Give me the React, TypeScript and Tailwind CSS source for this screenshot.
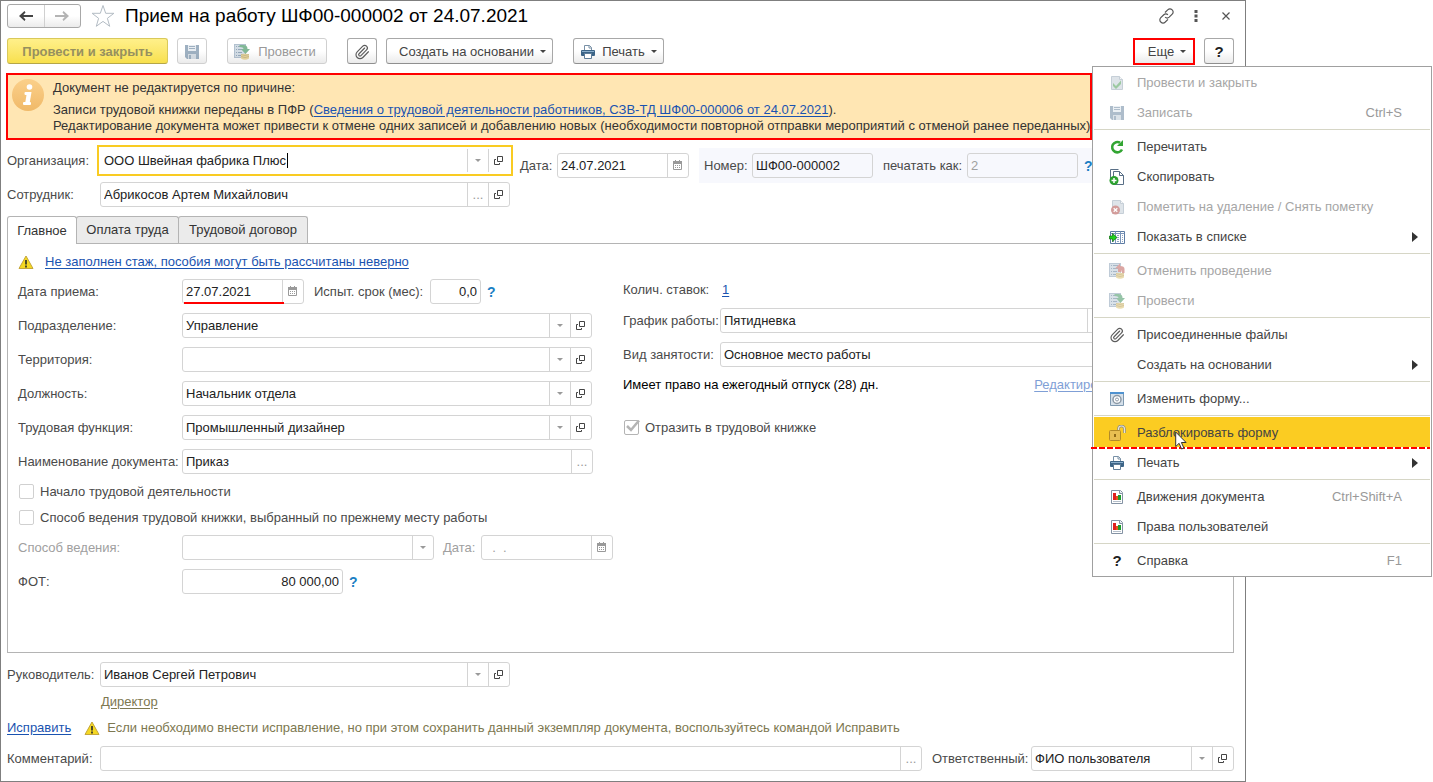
import type { ReactNode } from "react";
import clsx from "clsx";
import { Paperclip } from "lucide-react";

const CELL =
  "flex w-[21px] shrink-0 items-center justify-center border-l border-[#d4d4d4] leading-none";

/* ---------- icons ---------- */

function FloppyIcon() {
  return (
    <svg width="16" height="16" viewBox="0 0 16 16" aria-hidden="true">
      <path d="M1 1h14v14H3l-2-2z" fill="#5f7d99" />
      <path d="M4 1h8v6H4z" fill="#d9e2ea" />
      <path d="M5 2.500h6M5 4.500h6" stroke="#5f7d99" />
      <path d="M4 10h8v5H4z" fill="#b9c6d2" />
      <path d="M5 11h2v4H5z" fill="#5f7d99" />
    </svg>
  );
}

function PostIcon({ undo = false }: { undo?: boolean }) {
  return (
    <svg width="16" height="16" viewBox="0 0 16 16" aria-hidden="true">
      <path d="M0 0h12v14H0z" fill="#8098b0" />
      <path d="M1 1h10v12H1z" fill="#b5c5d3" />
      <path d="M2 2.500h1M4 2.500h5M2 5.500h1M4 5.500h5M2 8.500h1M4 8.500h4M2 11.500h1M4 11.500h3" stroke="#4f6f8f" />
      {undo ? (
        <path d="M11 0.500L6 5.500h3V9h3.500V7.500H13V10h2.500V6Q15.500 3 11 3z" fill="#b8504a" />
      ) : (
        <path d="M5.500 1H9.500q4 0 4 4h2.500l-4.500 5L7 5h2.500Q9.500 3 5.500 3z" fill="#2f8a52" />
      )}
      <path d="M7 10.500q4-1.500 8 0v4q-4 2.500-8 0z" fill="#d8bb62" />
      <path d="M7 12.500q4 2 8 0M7 10.500q4 2 8 0" fill="none" stroke="#9d8233" strokeWidth=".8" />
    </svg>
  );
}

function ClipIcon() {
  return <Paperclip size={16} strokeWidth={1.75} className="text-[#5c5c5c]" aria-hidden="true" />;
}

function PrinterIcon() {
  return (
    <svg width="16" height="16" viewBox="0 0 16 16" aria-hidden="true">
      <path d="M4.500 6V1.500h5l2 2V6" fill="#fff" stroke="#7890a6" />
      <path d="M9 1.500V4h2.500" fill="none" stroke="#7890a6" />
      <rect x="1" y="6" width="14" height="6" rx="1" fill="#3c6487" />
      <path d="M2 7.500h12" stroke="#8db0cd" />
      <path d="M4.500 9.500h7v5h-7z" fill="#fff" stroke="#5f7d99" />
    </svg>
  );
}

function DocCheckIcon() {
  return (
    <svg width="16" height="16" viewBox="0 0 16 16" aria-hidden="true">
      <path d="M2.500 1.500h8l3 3v10h-11z" fill="#bfcad5" stroke="#8fa0b0" />
      <path d="M10.500 1.500v3h3" fill="#eef2f5" stroke="#8fa0b0" />
      <path d="M4 8l3 3 5-5.500V9L7 14l-3-3z" fill="#3c9445" />
    </svg>
  );
}

function RefreshIcon() {
  return (
    <svg width="16" height="16" viewBox="0 0 16 16" aria-hidden="true">
      <path d="M13 10.500A5.200 5.200 0 1 1 11 3.700" fill="none" stroke="#32a532" strokeWidth="2.600" />
      <path d="M8 7h6V1z" fill="#32a532" />
    </svg>
  );
}

function CopyDocIcon() {
  return (
    <svg width="16" height="18" viewBox="0 0 16 18" aria-hidden="true">
      <path d="M1.500 13V1.500h8" fill="none" stroke="#596f86" />
      <path d="M4.500 3.500h6l4 4v9h-10z" fill="#fff" stroke="#596f86" />
      <path d="M10.500 3.500v4h4" fill="none" stroke="#596f86" />
      <circle cx="5" cy="12.500" r="4.500" fill="#2ba02f" />
      <path d="M5 10v5M2.500 12.500h5" stroke="#fff" strokeWidth="1.500" />
    </svg>
  );
}

function DocDeleteIcon() {
  return (
    <svg width="16" height="16" viewBox="0 0 16 16" aria-hidden="true">
      <path d="M3.500 1.500h8l3 3v10h-11z" fill="#bfcad5" stroke="#8fa0b0" />
      <path d="M11.500 1.500v3h3" fill="#eef2f5" stroke="#8fa0b0" />
      <circle cx="6.500" cy="11" r="4.500" fill="#a83c38" />
      <path d="M4.700 9.200l3.600 3.600M8.300 9.200l-3.600 3.600" stroke="#fff" strokeWidth="1.300" />
    </svg>
  );
}

function ListIcon() {
  return (
    <svg width="16" height="16" viewBox="0 0 16 16" aria-hidden="true">
      <path d="M1.500 2.500h14v12h-14z" fill="#fff" stroke="#5c7ba3" />
      <path d="M1.500 4.500h14M6.500 2.500v12M11.500 2.500v12" stroke="#7b96ba" />
      <path d="M8 6.500h2M8 8.500h2M8 10.500h2M8 12.500h2M13 6.500h1M13 8.500h1M13 10.500h1M13 12.500h1M3 12.500h2" stroke="#8ba3c1" />
      <path d="M0.500 7h3V4.500L8 8.500 3.500 12.500V10h-3z" fill="#1fd11f" stroke="#0b6c0b" strokeWidth=".7" />
    </svg>
  );
}

function FormIcon() {
  return (
    <svg width="16" height="16" viewBox="0 0 16 16" aria-hidden="true">
      <path d="M1.500 1.500h13v13h-13z" fill="#d5e0ea" stroke="#7f99b0" />
      <path d="M1 1h14v2H1z" fill="#4f92d0" />
      <circle cx="8" cy="8.500" r="4" fill="#fff" stroke="#8b98a5" strokeWidth="1.500" />
      <circle cx="8" cy="8.500" r="1.500" fill="none" stroke="#8b98a5" />
    </svg>
  );
}

function UnlockIcon() {
  return (
    <svg width="17" height="16" viewBox="0 0 17 16" aria-hidden="true">
      <path d="M9.500 7V4q0-3 3-3t3 3v4" fill="none" stroke="#8b8b80" strokeWidth="2.600" />
      <path d="M9.500 7V4q0-3 3-3t3 3v4" fill="none" stroke="#e8e4d6" strokeWidth="1.200" />
      <rect x="0.500" y="5.500" width="11" height="10" rx="1" fill="#e8bf52" stroke="#b28a28" />
      <path d="M6 9v3" stroke="#7a560a" strokeWidth="1.600" />
    </svg>
  );
}

function ReportIcon() {
  return (
    <svg width="16" height="16" viewBox="0 0 16 16" aria-hidden="true">
      <path d="M2.500 1.500h9l2 2v11h-11z" fill="#fff" stroke="#8493a4" />
      <path d="M10.500 1.500v3h3" fill="#e3e9ef" stroke="#8493a4" />
      <path d="M4 4h3v7H4z" fill="#de2020" />
      <path d="M7 7h2v4H7z" fill="#e25a1c" />
      <path d="M9 6h3v5H9z" fill="#1c9c2b" />
      <path d="M4 12.500h8" stroke="#b5bfca" />
    </svg>
  );
}

function CalendarIcon() {
  return (
    <svg width="10" height="11" viewBox="0 0 10 11" aria-hidden="true">
      <path d="M.5 2.500h8v7h-8z" fill="#fff" stroke="#9a9a9a" />
      <path d="M0 1h9v3H0zM2 0h1v1H2zM6 0h1v1H6z" fill="#9a9a9a" />
      <path d="M2 5.500h5M2 7.500h5" stroke="#9a9a9a" strokeDasharray="1 1" />
    </svg>
  );
}

function OpenIcon() {
  return (
    <svg width="10" height="9" viewBox="0 0 10 9" fill="none" stroke="#444" aria-hidden="true">
      <path d="M3.500 .5h5v5h-5z" />
      <path d="M2 3.500H.5v5h5V7" />
    </svg>
  );
}

function Caret({ className }: { className?: string }) {
  return (
    <svg width="6" height="3" viewBox="0 0 6 3" className={clsx("shrink-0", className)} aria-hidden="true">
      <path d="M0 0h6L3 3z" fill="currentColor" />
    </svg>
  );
}

function WarningIcon() {
  return (
    <svg width="16" height="15" viewBox="0 0 16 15" aria-hidden="true">
      <path d="M8 1l7 12.500H1z" fill="#f5d822" stroke="#c4a63a" strokeLinejoin="round" />
      <path d="M8 5v4.500M8 10.500v2" stroke="#3d3b28" strokeWidth="1.800" />
    </svg>
  );
}

function ArrowIcon({ forward = false }: { forward?: boolean }) {
  return (
    <svg width="14" height="10" viewBox="0 0 14 10" className={forward ? "rotate-180 text-[#b4b4b4]" : "text-[#444]"} aria-hidden="true">
      <path d="M5.500 0L0 5l5.500 5 1-1.500L4.300 6H14V4H4.300l2.200-2.500z" fill="currentColor" />
    </svg>
  );
}

/* ---------- form controls ---------- */

type Cell = "drop" | "open" | "more" | "date";

const CELL_TITLES: Record<Cell, string> = {
  drop: "Выбрать",
  open: "Открыть",
  more: "Показать все",
  date: "Календарь",
};

interface FieldProps {
  id: string;
  value?: string;
  cells?: Cell[];
  className?: string;
  focused?: boolean;
  disabled?: boolean;
  align?: "left" | "right";
}

function Field({ id, value = "", cells = [], className, focused, disabled, align = "left" }: FieldProps) {
  return (
    <div
      className={clsx(
        "relative flex",
        focused ? "h-[31px] border-2 border-[#f9cb22] p-0.5" : "h-[25px] rounded-[3px] border border-[#d4d4d4]",
        className
      )}
    >
      <input
        id={id}
        defaultValue={value}
        disabled={disabled}
        className={clsx(
          "min-w-0 flex-1 bg-transparent px-[3px] outline-none",
          align === "right" && "text-right",
          disabled ? "text-[#a0a0a0]" : "text-[#222]"
        )}
      />
      {focused && <span className="pointer-events-none absolute top-[6px] left-[188px] h-[15px] w-px bg-black" />}
      {cells.map((cell) => (
        <button key={cell} type="button" aria-label={CELL_TITLES[cell]} className={CELL}>
          {cell === "drop" && <Caret className="text-[#9a9a9a]" />}
          {cell === "open" && <OpenIcon />}
          {cell === "more" && <span className="text-[#9a9a9a]">...</span>}
          {cell === "date" && <CalendarIcon />}
        </button>
      ))}
    </div>
  );
}

function Row({ id, label, children, muted }: { id: string; label: string; children: ReactNode; muted?: boolean }) {
  return (
    <div className="flex items-center">
      <label htmlFor={id} className={clsx("w-[164px] shrink-0 whitespace-nowrap", muted && "text-[#a0a0a0]")}>
        {label}
      </label>
      {children}
    </div>
  );
}

function Check({ label, checked }: { label: string; checked?: boolean }) {
  return (
    <label className="relative flex h-[15px] items-center gap-1.5 whitespace-nowrap">
      <input
        type="checkbox"
        defaultChecked={checked}
        className={clsx("ml-px size-[15px] appearance-none rounded-[2px] border bg-white", checked ? "border-[#b4b4b4]" : "border-[#d0d0d0]")}
      />
      {checked && (
        <svg width="16" height="14" viewBox="0 0 16 14" className="pointer-events-none absolute top-0 left-px" aria-hidden="true">
          <path d="M3 6l4 4 8-9.500" fill="none" stroke="#b4b4b4" strokeWidth="2.500" />
        </svg>
      )}
      {label}
    </label>
  );
}

function Help() {
  return (
    <button type="button" className="text-sm font-bold text-[#1b7fc4]">
      ?
    </button>
  );
}

function ToolButton({ children, className, disabled, label }: { children: ReactNode; className?: string; disabled?: boolean; label?: string }) {
  return (
    <button
      type="button"
      disabled={disabled}
      aria-label={label}
      className={clsx(
        "flex h-[26px] items-center justify-center rounded-[3px] border bg-linear-to-b from-white from-50% to-[#ebebeb] pt-px whitespace-nowrap",
        disabled ? "border-[#d0d0d0] text-[#999]" : "border-[#a8a8a8] border-b-[#8f8f8f] text-[#444]",
        className
      )}
    >
      {children}
    </button>
  );
}

/* ---------- "Еще" menu ---------- */

interface MenuEntry {
  text: string;
  icon?: ReactNode;
  keys?: string;
  disabled?: boolean;
  submenu?: boolean;
  active?: boolean;
}

const MENU: MenuEntry[][] = [
  [
    { text: "Провести и закрыть", icon: <DocCheckIcon />, disabled: true },
    { text: "Записать", icon: <FloppyIcon />, keys: "Ctrl+S", disabled: true },
  ],
  [
    { text: "Перечитать", icon: <RefreshIcon /> },
    { text: "Скопировать", icon: <CopyDocIcon /> },
    { text: "Пометить на удаление / Снять пометку", icon: <DocDeleteIcon />, disabled: true },
    { text: "Показать в списке", icon: <ListIcon />, submenu: true },
  ],
  [
    { text: "Отменить проведение", icon: <PostIcon undo />, disabled: true },
    { text: "Провести", icon: <PostIcon />, disabled: true },
  ],
  [
    { text: "Присоединенные файлы", icon: <ClipIcon /> },
    { text: "Создать на основании", submenu: true },
  ],
  [{ text: "Изменить форму...", icon: <FormIcon /> }],
  [
    { text: "Разблокировать форму", icon: <UnlockIcon />, active: true },
    { text: "Печать", icon: <PrinterIcon />, submenu: true },
  ],
  [
    { text: "Движения документа", icon: <ReportIcon />, keys: "Ctrl+Shift+A" },
    { text: "Права пользователей", icon: <ReportIcon /> },
  ],
  [{ text: "Справка", icon: <span className="text-[15px] font-bold text-[#222]">?</span>, keys: "F1" }],
];

function MenuItem({ item }: { item: MenuEntry }) {
  return (
    <button
      type="button"
      role="menuitem"
      disabled={item.disabled}
      className={clsx(
        "relative flex h-[30px] w-full items-center pt-0.5 pr-[28px] pl-[14px] text-left whitespace-nowrap",
        item.disabled ? "text-[#a6a6a6]" : "text-[#444]",
        item.active && "bg-[#fbcc22]"
      )}
    >
      <span className={clsx("flex w-[18px] justify-center", item.disabled && "opacity-50")}>{item.icon}</span>
      <span className="ml-[11px] flex-1">{item.text}</span>
      {item.keys && <span className="text-[#999]">{item.keys}</span>}
      {item.submenu && (
        <svg width="6" height="10" viewBox="0 0 6 10" className="absolute right-3 text-[#333]" aria-hidden="true">
          <path d="M0 0l6 5-6 5z" fill="currentColor" />
        </svg>
      )}
      {item.active && (
        <>
          <span className="absolute right-0 -bottom-0.5 -left-[3px] z-10 h-0.5 bg-[repeating-linear-gradient(90deg,#f00_0_6px,transparent_6px_8px)]" />
          <svg width="12" height="19" viewBox="0 0 12 19" className="absolute top-[14px] left-[81px] z-20" aria-hidden="true">
            <path d="M.7 1v14.500l3.400-3.200 2.500 5.700 2.300-1-2.500-5.500h4.700z" fill="#fff" stroke="#333" />
          </svg>
        </>
      )}
    </button>
  );
}

function MoreMenu() {
  return (
    <div role="menu" className="absolute top-7 -left-[41px] z-10 w-[340px] border border-[#a0a0a0] bg-white px-px pb-px">
      {MENU.map((group, i) => (
        <div key={group[0].text}>
          {i > 0 && <div className="mt-0.5 mb-px h-px bg-[#d6d6c6]" />}
          {group.map((item) => (
            <MenuItem key={item.text} item={item} />
          ))}
        </div>
      ))}
    </div>
  );
}

/* ---------- page sections ---------- */

function TitleBar() {
  return (
    <header className="flex h-6 items-center">
      <div className="flex h-6 w-[74px] rounded-[3px] border border-[#a8a8a8] bg-linear-to-b from-white from-50% to-[#ebebeb]">
        <button type="button" aria-label="Назад" className="flex flex-1 items-center justify-center">
          <ArrowIcon />
        </button>
        <button type="button" aria-label="Вперед" className="flex flex-1 items-center justify-center border-l border-[#d0d0d0]">
          <ArrowIcon forward />
        </button>
      </div>
      <button type="button" aria-label="В избранное" className="ml-[10px]">
        <svg width="24" height="24" viewBox="0 0 24 24" aria-hidden="true">
          <path d="M12 1.500l2.700 7.800h8.200l-6.500 5 2.300 8-6.700-4.900-6.700 4.900 2.300-8-6.500-5h8.200z" fill="#fff" stroke="#b3bcc4" />
        </svg>
      </button>
      <h1 className="ml-[10px] flex-1 text-[19px] leading-6 whitespace-nowrap text-black">Прием на работу ШФ00-000002 от 24.07.2021</h1>
      <button type="button" aria-label="Получить ссылку" className="mr-[19px]">
        <svg width="17" height="16" viewBox="0 0 17 16" fill="none" stroke="#555" strokeWidth="1.200" aria-hidden="true">
          <path d="M7 4.500l2.700-2.600c1.200-1.100 3.200-1.200 4.500 0 1.300 1.200 1.200 3.100 0 4.300l-3 2.900c-1.200 1.100-3 1-4.100 0" />
          <path d="M10 11.400l-2.700 2.600c-1.200 1.100-3.200 1.200-4.500 0-1.300-1.200-1.200-3.100 0-4.300l3-2.900c1.200-1.100 3-1 4.100 0" />
        </svg>
      </button>
      <button type="button" aria-label="Дополнительно" className="mr-[24px]">
        <svg width="4" height="12" viewBox="0 0 4 12" fill="#555" aria-hidden="true">
          <path d="M.5 0h3v3h-3zM.5 4.500h3v3h-3zM.5 9h3v3h-3z" />
        </svg>
      </button>
      <button type="button" aria-label="Закрыть" className="mr-1">
        <svg width="8" height="8" viewBox="0 0 8 8" stroke="#555" strokeWidth="1.200" aria-hidden="true">
          <path d="M.5 .5l7 7M7.500 .5l-7 7" />
        </svg>
      </button>
    </header>
  );
}

function Toolbar() {
  return (
    <div className="mt-2.5 flex">
      <button
        type="button"
        disabled
        className="h-[26px] w-[161px] rounded-[3px] border border-[#d9c95a] border-b-[#b5a648] bg-linear-to-b from-[#fff08a] to-[#f8e04c] pt-px font-bold whitespace-nowrap text-[#96905f]"
      >
        Провести и закрыть
      </button>
      <ToolButton disabled label="Записать" className="ml-[9px] w-[30px]">
        <span className="opacity-60"><FloppyIcon /></span>
      </ToolButton>
      <ToolButton disabled className="ml-5 w-[100px] gap-2 pr-1">
        <span className="opacity-60"><PostIcon /></span>
        Провести
      </ToolButton>
      <ToolButton label="Присоединенные файлы" className="ml-5 w-[30px]">
        <ClipIcon />
      </ToolButton>
      <ToolButton className="ml-[9px] w-[167px] gap-1.5 pl-1.5">
        Создать на основании
        <Caret />
      </ToolButton>
      <ToolButton className="ml-5 w-[91px] gap-1.5">
        <PrinterIcon />
        <span>Печать</span>
        <Caret />
      </ToolButton>
      <div className="relative mr-[9px] ml-auto">
        <button
          type="button"
          aria-haspopup="menu"
          className="flex h-[27px] w-[62px] items-center justify-center gap-1.5 border-2 border-[#f00] bg-linear-to-b from-white from-50% to-[#ebebeb] pl-1.5 text-[#444]"
        >
          Еще
          <Caret />
        </button>
        <MoreMenu />
      </div>
      <ToolButton className="w-[30px]">
        <span className="text-[15px] font-bold text-[#222]">?</span>
      </ToolButton>
    </div>
  );
}

function Banner() {
  return (
    <section className="mt-2 mr-[142px] -ml-px flex h-[67px] border-2 border-[#f00] bg-[#ffe6b3] text-[#333]">
      <span className="mt-1 ml-1 flex size-8 shrink-0 items-center justify-center rounded-full bg-linear-to-b from-[#fbd08a] to-[#f0b968]">
        <svg width="10" height="22" viewBox="0 0 10 22" fill="#fff" aria-hidden="true">
          <circle cx="6.500" cy="3" r="2.800" />
          <rect x="1.500" y="8" width="6" height="3" rx="1" />
          <rect x="0" y="18" width="8" height="3" rx="1" />
          <path d="M4 8h4.500L6.500 20H2z" />
        </svg>
      </span>
      <div className="ml-[9px] pt-[5px] leading-4 whitespace-nowrap">
        <p>Документ не редактируется по причине:</p>
        <p className="mt-[6px]">
          Записи трудовой книжки переданы в ПФР (
          <a href="#szv-td" className="text-[#1a53b0] underline underline-offset-2">
            Сведения о трудовой деятельности работников, СЗВ-ТД ШФ00-000006 от 24.07.2021
          </a>
          ).
        </p>
        <p>
          Редактирование документа может привести к отмене одних записей и добавлению новых (необходимости повторной отправки мероприятий с отменой ранее переданных).
        </p>
      </div>
    </section>
  );
}

function DocumentHeader() {
  return (
    <section className="mt-[5px] flex items-start">
      <div className="flex flex-col gap-1.5">
        <div className="flex items-center">
          <label htmlFor="org" className="w-[90px]">Организация:</label>
          <Field id="org" value="ООО Швейная фабрика Плюс" cells={["drop", "open"]} focused className="w-[416px]" />
        </div>
        <div className="flex items-center">
          <label htmlFor="employee" className="w-[93px]">Сотрудник:</label>
          <Field id="employee" value="Абрикосов Артем Михайлович" cells={["more", "open"]} className="w-[410px]" />
        </div>
      </div>
      <div className="mt-[3px] ml-[7px] flex h-[35px] flex-1 items-center">
        <label htmlFor="doc-date" className="w-[37px]">Дата:</label>
        <Field id="doc-date" value="24.07.2021" cells={["date"]} className="w-[132px]" />
        <div className="ml-[10px] flex h-[35px] flex-1 items-center bg-[#f7f8fd] pl-[5px] whitespace-nowrap">
          <label htmlFor="doc-number" className="w-12">Номер:</label>
          <Field id="doc-number" value="ШФ00-000002" className="w-[121px]" />
          <label htmlFor="print-as" className="ml-[10px] w-[84px]">печатать как:</label>
          <Field id="print-as" value="2" disabled className="mr-1.5 w-[111px]" />
          <Help />
        </div>
      </div>
    </section>
  );
}

function Tabs() {
  return (
    <div role="tablist" className="mt-[9px] flex text-[#333]">
      <button type="button" role="tab" aria-selected="true" className="relative -mb-px h-7 w-[70px] rounded-t-[3px] border border-b-0 border-[#b4b4b4] bg-white">
        Главное
      </button>
      <button type="button" role="tab" aria-selected="false" className="-ml-px h-[27px] w-[103px] rounded-t-[3px] border border-b-0 border-[#b4b4b4] bg-[#ebebeb]">
        Оплата труда
      </button>
      <button type="button" role="tab" aria-selected="false" className="-ml-px h-[27px] w-[130px] rounded-t-[3px] border border-b-0 border-[#b4b4b4] bg-[#ebebeb]">
        Трудовой договор
      </button>
    </div>
  );
}

function MainTab() {
  return (
    <section className="flex border border-[#b4b4b4] px-[10px] pt-2 pb-[58px]">
      <div className="w-[595px]">
        <div className="flex h-5 items-center gap-[11px]">
          <WarningIcon />
          <a href="#experience" className="text-[#1a53b0] underline underline-offset-2">Не заполнен стаж, пособия могут быть рассчитаны неверно</a>
        </div>
        <div className="mt-[7px] flex flex-col gap-[9px]">
          <Row id="hire-date" label="Дата приема:">
            <div className="relative">
              <Field id="hire-date" value="27.07.2021" cells={["date"]} className="w-[122px]" />
              <span className="absolute bottom-0 left-0.5 h-0.5 w-[100px] bg-[#f00]" />
            </div>
            <label htmlFor="probation" className="ml-[10px] w-[116px] whitespace-nowrap">Испыт. срок (мес):</label>
            <Field id="probation" value="0,0" align="right" className="mr-1.5 w-[51px]" />
            <Help />
          </Row>
          <Row id="department" label="Подразделение:">
            <Field id="department" value="Управление" cells={["drop", "open"]} className="w-[410px]" />
          </Row>
          <Row id="territory" label="Территория:">
            <Field id="territory" cells={["drop", "open"]} className="w-[410px]" />
          </Row>
          <Row id="position" label="Должность:">
            <Field id="position" value="Начальник отдела" cells={["drop", "open"]} className="w-[410px]" />
          </Row>
          <Row id="function" label="Трудовая функция:">
            <Field id="function" value="Промышленный дизайнер" cells={["drop", "open"]} className="w-[410px]" />
          </Row>
          <Row id="doc-name" label="Наименование документа:">
            <Field id="doc-name" value="Приказ" cells={["more"]} className="w-[411px]" />
          </Row>
        </div>
        <div className="mt-[10px] mb-[10px] flex flex-col gap-[11px]">
          <Check label="Начало трудовой деятельности" />
          <Check label="Способ ведения трудовой книжки, выбранный по прежнему месту работы" />
        </div>
        <div className="flex flex-col gap-[9px]">
          <Row id="book-kind" label="Способ ведения:" muted>
            <Field id="book-kind" cells={["drop"]} disabled className="w-[252px]" />
            <label htmlFor="book-date" className="ml-[9px] w-[38px] text-[#a0a0a0]">Дата:</label>
            <Field id="book-date" value="  .  ." cells={["date"]} disabled className="w-[132px]" />
          </Row>
          <Row id="payroll" label="ФОТ:">
            <Field id="payroll" value="80 000,00" align="right" className="mr-1.5 w-[161px]" />
            <Help />
          </Row>
        </div>
      </div>

      <div className="flex-1 pt-7 pl-[10px]">
        <div className="flex h-5 items-center">
          <span className="w-[99px]">Колич. ставок:</span>
          <a href="#rates" className="text-[#1a53b0] underline underline-offset-2">1</a>
        </div>
        <div className="mt-2 flex flex-col gap-[9px]">
          <div className="flex items-center">
            <label htmlFor="schedule" className="w-[97px] whitespace-nowrap">График работы:</label>
            <Field id="schedule" value="Пятидневка" cells={["drop", "open"]} className="w-[410px]" />
          </div>
          <div className="flex items-center">
            <label htmlFor="employment" className="w-[97px] whitespace-nowrap">Вид занятости:</label>
            <Field id="employment" value="Основное место работы" cells={["drop"]} className="w-[410px]" />
          </div>
        </div>
        <div className="mt-2 flex h-5 items-center justify-between whitespace-nowrap">
          <span className="text-black">Имеет право на ежегодный отпуск (28) дн.</span>
          <a href="#vacation" className="mr-[99px] text-[#7f9fd6] underline underline-offset-2">Редактировать</a>
        </div>
        <div className="mt-[25px]">
          <Check label="Отразить в трудовой книжке" checked />
        </div>
      </div>
    </section>
  );
}

function Footer() {
  return (
    <footer className="mt-[9px]">
      <div className="flex items-center">
        <label htmlFor="head" className="w-[93px]">Руководитель:</label>
        <Field id="head" value="Иванов Сергей Петрович" cells={["drop", "open"]} className="w-[410px]" />
      </div>
      <a href="#director" className="mt-[5px] ml-[94px] block h-5 w-fit leading-5 text-[#7d7850] underline underline-offset-2">Директор</a>
      <div className="mt-1.5 flex h-5 items-center">
        <a href="#fix" className="mr-[13px] text-[#1a53b0] underline underline-offset-2">Исправить</a>
        <WarningIcon />
        <span className="ml-[7px] text-[#7d7850]">
          Если необходимо внести исправление, но при этом сохранить данный экземпляр документа, воспользуйтесь командой Исправить
        </span>
      </div>
      <div className="mt-2 flex items-center">
        <label htmlFor="comment" className="w-[93px]">Комментарий:</label>
        <Field id="comment" cells={["more"]} className="flex-1" />
        <label htmlFor="responsible" className="ml-[10px] w-[99px] whitespace-nowrap">Ответственный:</label>
        <Field id="responsible" value="ФИО пользователя" cells={["drop", "open"]} className="w-[203px]" />
      </div>
    </footer>
  );
}

export default function App() {
  return (
    <div className="min-h-screen bg-white pr-[187px] font-['Liberation_Sans',Arial,sans-serif] text-[13px] leading-4 text-[#4a4a4a]">
      <main className="border border-[#7f7f7f] pt-[3px] pr-[11px] pb-2.5 pl-1.5">
        <TitleBar />
        <Toolbar />
        <Banner />
        <DocumentHeader />
        <Tabs />
        <MainTab />
        <Footer />
      </main>
    </div>
  );
}
